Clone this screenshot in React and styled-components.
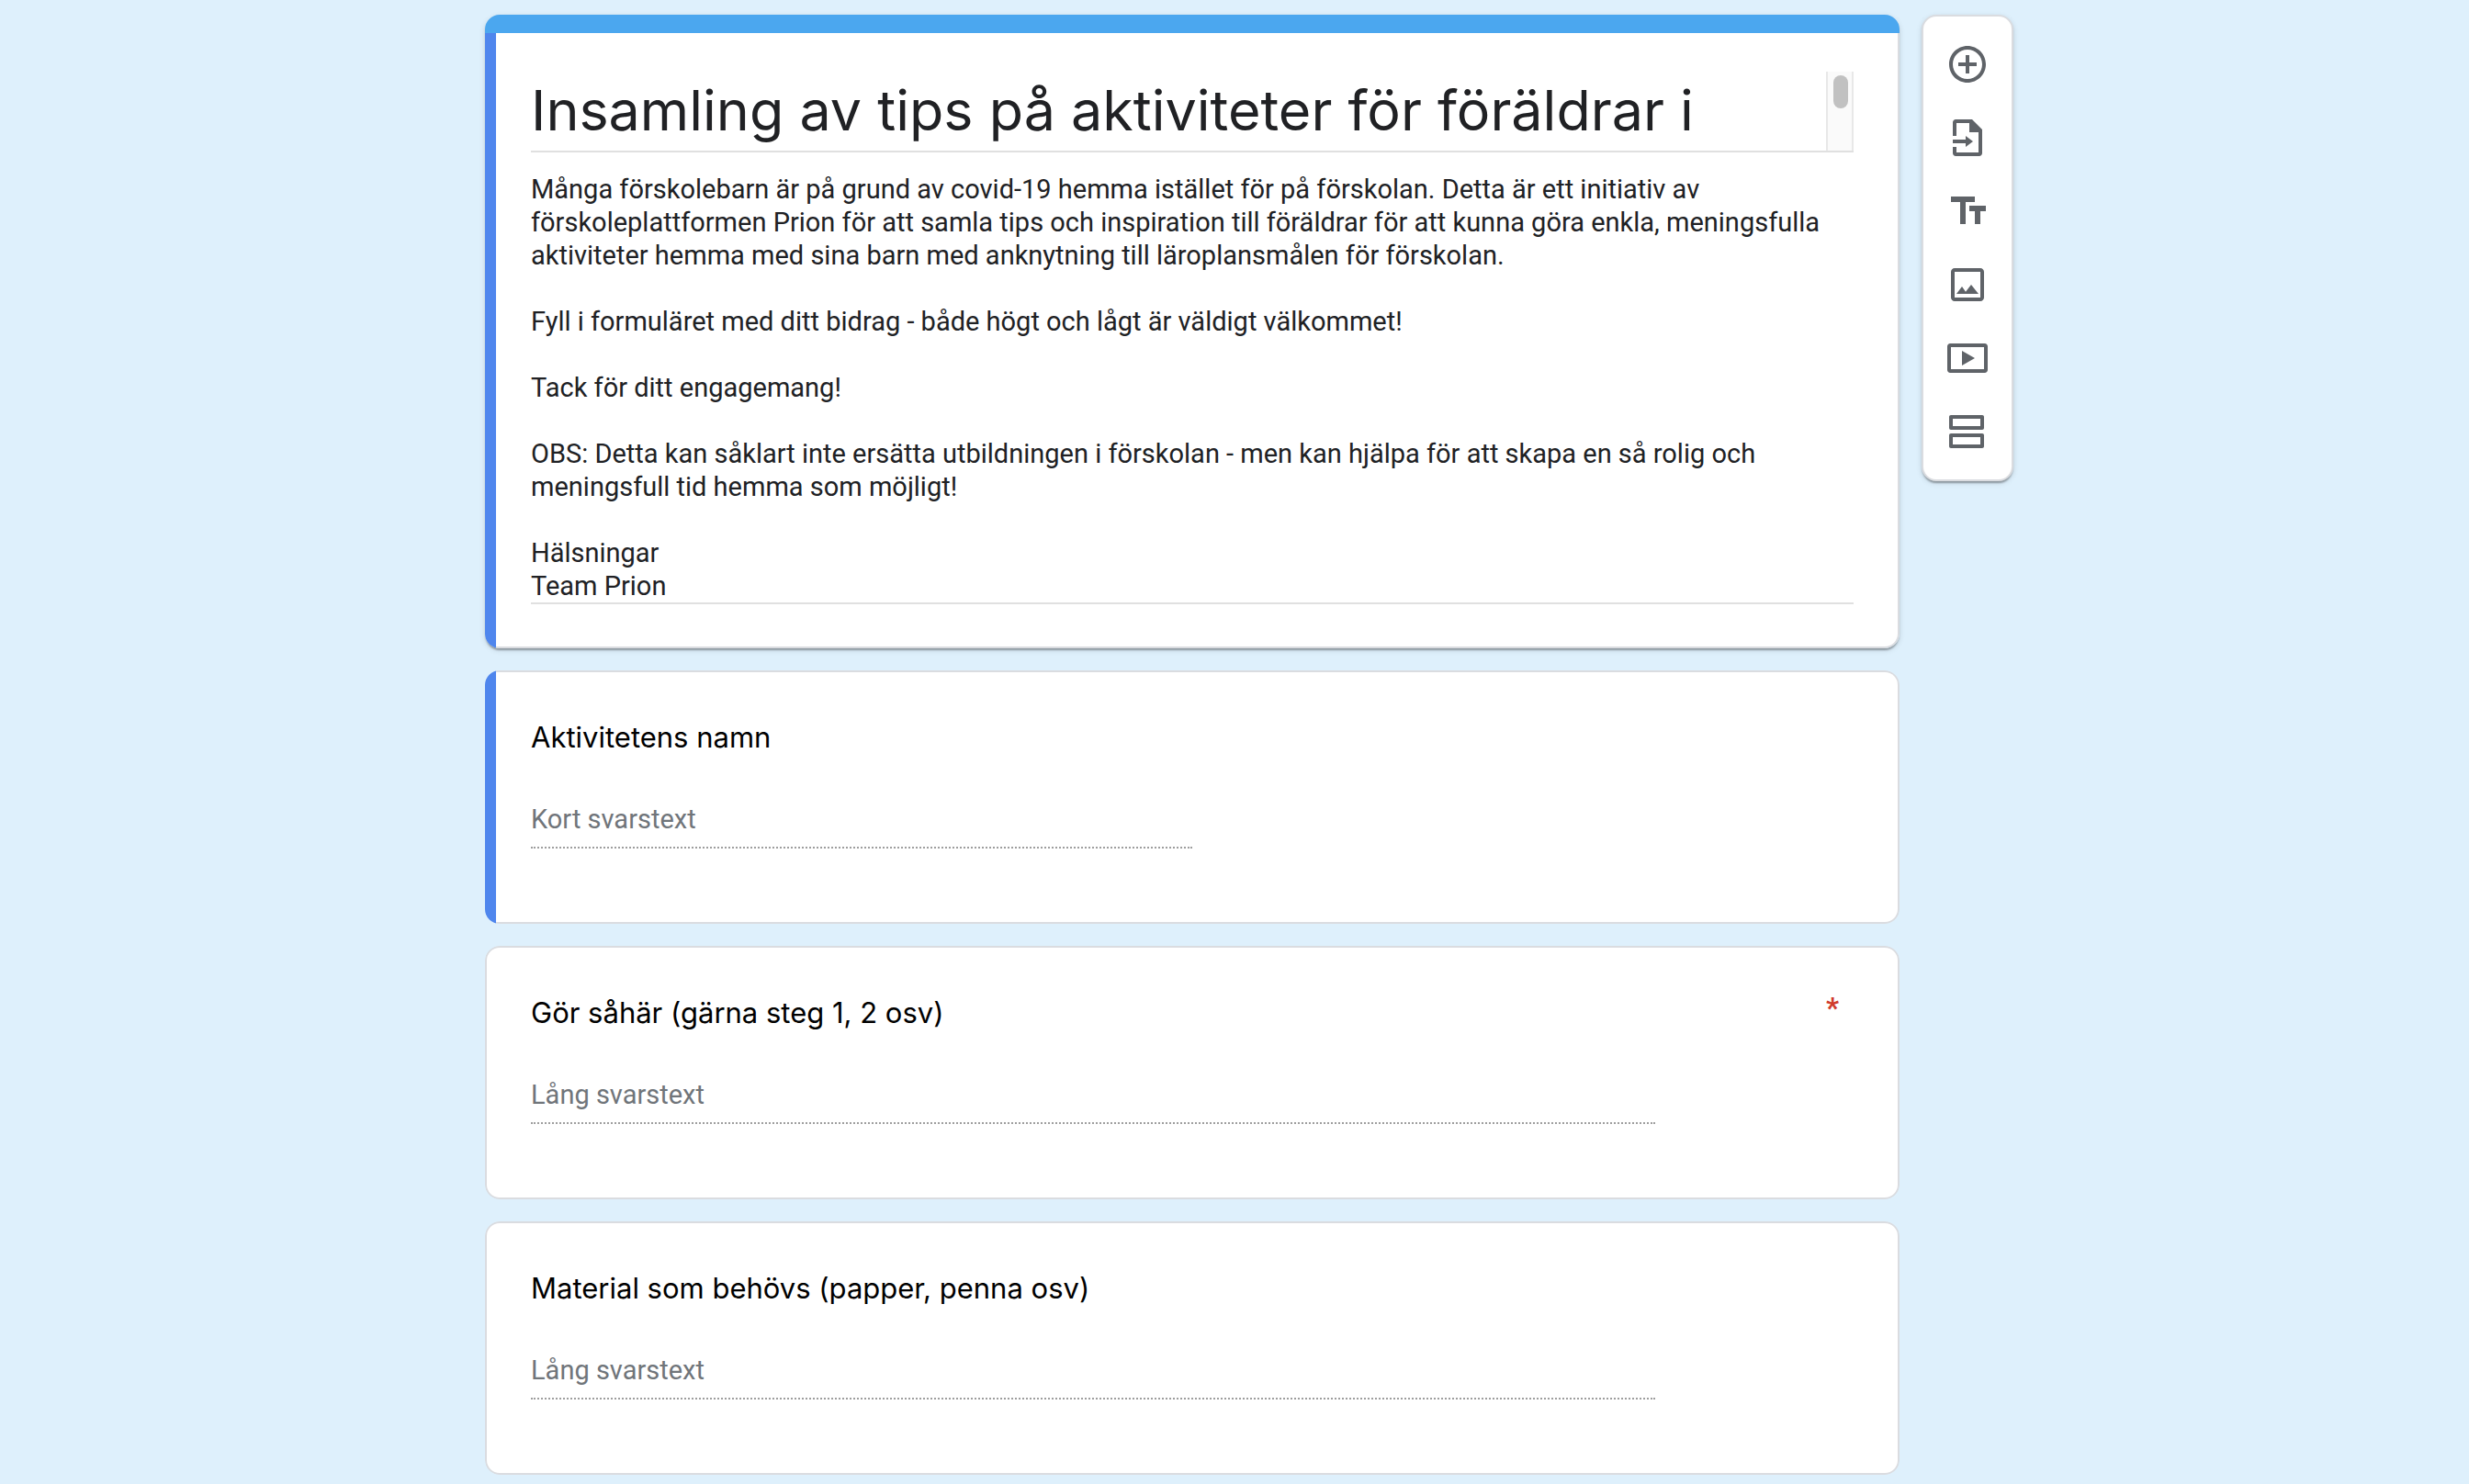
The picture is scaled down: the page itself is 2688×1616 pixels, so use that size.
import React from "react";
import styled, { createGlobalStyle, css } from "styled-components";

const GlobalStyle = createGlobalStyle`
  *, *::before, *::after { box-sizing: border-box; }
  body {
    margin: 0;
    background: #def0fc;
    color: #202124;
    font-family: Roboto, "Liberation Sans", sans-serif;
  }
`;

const display = css`
  font-family: Inter, Roboto, sans-serif;
  font-weight: 400;
`;

const raised = css`
  box-shadow:
    0 4px 2px -2px rgba(0, 0, 0, 0.2),
    0 2px 2px 0 rgba(0, 0, 0, 0.14),
    0 2px 6px 0 rgba(0, 0, 0, 0.12);
`;

const Page = styled.main`
  display: flex;
  justify-content: center;
  align-items: flex-start;
  gap: 24px;
  padding: 16px 0 12px 32px;
`;

const Form = styled.form`
  display: flex;
  flex-direction: column;
  gap: 24px;
  flex: 0 1 1540px;
  min-width: 0;
`;

const Card = styled.section`
  border-radius: 16px;
  overflow: hidden;
  ${(p) => p.$raised && raised}
`;

const ThemeBar = styled.div`
  height: 20px;
  background: #4ba7ef;
`;

const CardRow = styled.div`
  display: flex;
`;

const Stripe = styled.div`
  flex: 0 0 12px;
  background: #4f86ed;
`;

const CardBody = styled.div`
  flex: 1;
  min-width: 0;
  background: #fff;
  border: 2px solid #dadce0;
  border-radius: 16px;
  padding: 46px 48px 80px;

  ${(p) =>
    p.$striped &&
    css`
      border-left: 0;
      border-top-left-radius: 0;
      border-bottom-left-radius: 0;
      padding-left: 38px;
    `}

  ${(p) =>
    p.$header &&
    css`
      border-top: 0;
      border-top-right-radius: 0;
      padding-top: 42px;
      padding-bottom: 46px;
    `}
`;

const TitleField = styled.div`
  display: flex;
  height: 88px;
  border-bottom: 2px solid #e0e0e0;
`;

const TitleInput = styled.textarea`
  ${display}
  flex: 1;
  min-width: 0;
  height: 86px;
  padding: 0;
  border: 0;
  outline: 0;
  resize: none;
  overflow: hidden;
  background: transparent;
  color: #202124;
  font-size: 61px;
  line-height: 84px;
`;

const ScrollTrack = styled.div`
  flex: 0 0 30px;
  padding: 4px 4px 4px 6px;
  background: #fafafa;
  border: solid #e8e8e8;
  border-width: 0 2px;
`;

const ScrollThumb = styled.div`
  width: 16px;
  height: 36px;
  border-radius: 8px;
  background: #c1c1c1;
`;

const DescriptionInput = styled.textarea`
  display: block;
  width: 100%;
  margin-top: 22px;
  padding: 0;
  border: 0;
  border-bottom: 2px solid #e0e0e0;
  outline: 0;
  resize: none;
  overflow: hidden;
  field-sizing: content;
  background: transparent;
  color: #202124;
  font-family: Roboto, "Liberation Sans", sans-serif;
  font-size: 29px;
  line-height: 36px;
`;

const QuestionHead = styled.div`
  display: flex;
  align-items: flex-start;
  justify-content: space-between;
  margin-bottom: 46px;
`;

const QuestionLabel = styled.label`
  ${display}
  color: #000;
  font-size: 31px;
  line-height: 50px;
`;

const Required = styled.span`
  padding-right: 16px;
  color: #d03b2c;
  font-size: 31px;
  font-weight: 700;
  line-height: 40px;
`;

const AnswerInput = styled.input`
  display: block;
  width: ${(p) => (p.$long ? "85%" : "50%")};
  height: 50px;
  padding: 0 0 12px;
  border: 0;
  border-bottom: 2px dotted #9e9e9e;
  border-radius: 0;
  outline: 0;
  background: transparent;
  color: #202124;
  font-family: Roboto, "Liberation Sans", sans-serif;
  font-size: 29px;
  line-height: 36px;

  &::placeholder {
    color: #70757a;
    opacity: 1;
  }
`;

const Toolbar = styled.aside`
  display: flex;
  flex-direction: column;
  flex: none;
  width: 100px;
  padding: 12px 0;
  background: #fff;
  border: 2px solid #dadce0;
  border-radius: 16px;
  ${raised}
`;

const ToolButton = styled.button`
  display: flex;
  align-items: center;
  justify-content: center;
  height: 80px;
  padding: 0;
  border: 0;
  background: transparent;
  color: #5f6368;
  cursor: pointer;
`;

const ToolIcon = styled.svg`
  width: 48px;
  height: 48px;
  fill: currentColor;
`;

const tools = [
  {
    label: "Lägg till fråga",
    path: "M13 7h-2v4H7v2h4v4h2v-4h4v-2h-4V7zm-1-5C6.48 2 2 6.48 2 12s4.48 10 10 10 10-4.48 10-10S17.52 2 12 2zm0 18c-4.41 0-8-3.59-8-8s3.59-8 8-8 8 3.59 8 8-3.59 8-8 8z",
  },
  {
    label: "Importera frågor",
    path: "M14.5 2H5.6C4.7 2 4 2.7 4 3.6V11h2V4h7v5h5v11H6v-3H4v3.4c0 .9.7 1.6 1.6 1.6h12.8c.9 0 1.6-.7 1.6-1.6V7.5zM11 11v2H4v2h7v2l4-3z",
  },
  {
    label: "Lägg till titel och beskrivning",
    path: "M3 4v3h5v12h3V7h5V4zM22 9h-9v3h3v7h3v-7h3z",
  },
  {
    label: "Lägg till bild",
    path: "M19 5v14H5V5h14m0-2H5c-1.1 0-2 .9-2 2v14c0 1.1.9 2 2 2h14c1.1 0 2-.9 2-2V5c0-1.1-.9-2-2-2zM14 12l-3 3.9L9 13l-3 4h12z",
  },
  {
    label: "Lägg till video",
    path: "M21.4 4H2.6C1.7 4 1 4.7 1 5.6v12.8c0 .9.7 1.6 1.6 1.6h18.8c.9 0 1.6-.7 1.6-1.6V5.6c0-.9-.7-1.6-1.6-1.6zM21 18H3V6h18zM9 8v8l7-4z",
  },
  {
    label: "Lägg till avsnitt",
    path: "M20 3H3c-.6 0-1 .4-1 1v6c0 .6.4 1 1 1h17c.6 0 1-.4 1-1V4c0-.6-.4-1-1-1zM19 9H4V5h15zM20 13H3c-.6 0-1 .4-1 1v6c0 .6.4 1 1 1h17c.6 0 1-.4 1-1v-6c0-.6-.4-1-1-1zM19 19H4v-4h15z",
  },
];

const questions = [
  { id: "namn", label: "Aktivitetens namn", striped: true },
  { id: "steg", label: "Gör såhär (gärna steg 1, 2 osv)", long: true, required: true },
  { id: "material", label: "Material som behövs (papper, penna osv)", long: true },
];

const description = `Många förskolebarn är på grund av covid-19 hemma istället för på förskolan. Detta är ett initiativ av förskoleplattformen Prion för att samla tips och inspiration till föräldrar för att kunna göra enkla, meningsfulla aktiviteter hemma med sina barn med anknytning till läroplansmålen för förskolan.

Fyll i formuläret med ditt bidrag - både högt och lågt är väldigt välkommet!

Tack för ditt engagemang!

OBS: Detta kan såklart inte ersätta utbildningen i förskolan - men kan hjälpa för att skapa en så rolig och meningsfull tid hemma som möjligt!

Hälsningar
Team Prion`;

function Question({ id, label, striped, long, required }) {
  return (
    <Card>
      <CardRow>
        {striped && <Stripe />}
        <CardBody $striped={striped}>
          <QuestionHead>
            <QuestionLabel htmlFor={id}>{label}</QuestionLabel>
            {required && <Required>*</Required>}
          </QuestionHead>
          <AnswerInput
            id={id}
            type="text"
            $long={long}
            placeholder={long ? "Lång svarstext" : "Kort svarstext"}
          />
        </CardBody>
      </CardRow>
    </Card>
  );
}

export default function App() {
  return (
    <>
      <GlobalStyle />
      <Page>
        <Form>
          <Card $raised>
            <ThemeBar />
            <CardRow>
              <Stripe />
              <CardBody $striped $header>
                <TitleField>
                  <TitleInput
                    rows={1}
                    aria-label="Formulärets titel"
                    defaultValue="Insamling av tips på aktiviteter för föräldrar i"
                  />
                  <ScrollTrack>
                    <ScrollThumb />
                  </ScrollTrack>
                </TitleField>
                <DescriptionInput
                  rows={13}
                  aria-label="Formulärets beskrivning"
                  defaultValue={description}
                />
              </CardBody>
            </CardRow>
          </Card>
          {questions.map((q) => (
            <Question key={q.id} {...q} />
          ))}
        </Form>
        <Toolbar>
          {tools.map((t) => (
            <ToolButton key={t.label} type="button" aria-label={t.label}>
              <ToolIcon viewBox="0 0 24 24" aria-hidden="true">
                <path d={t.path} fillRule="evenodd" />
              </ToolIcon>
            </ToolButton>
          ))}
        </Toolbar>
      </Page>
    </>
  );
}
